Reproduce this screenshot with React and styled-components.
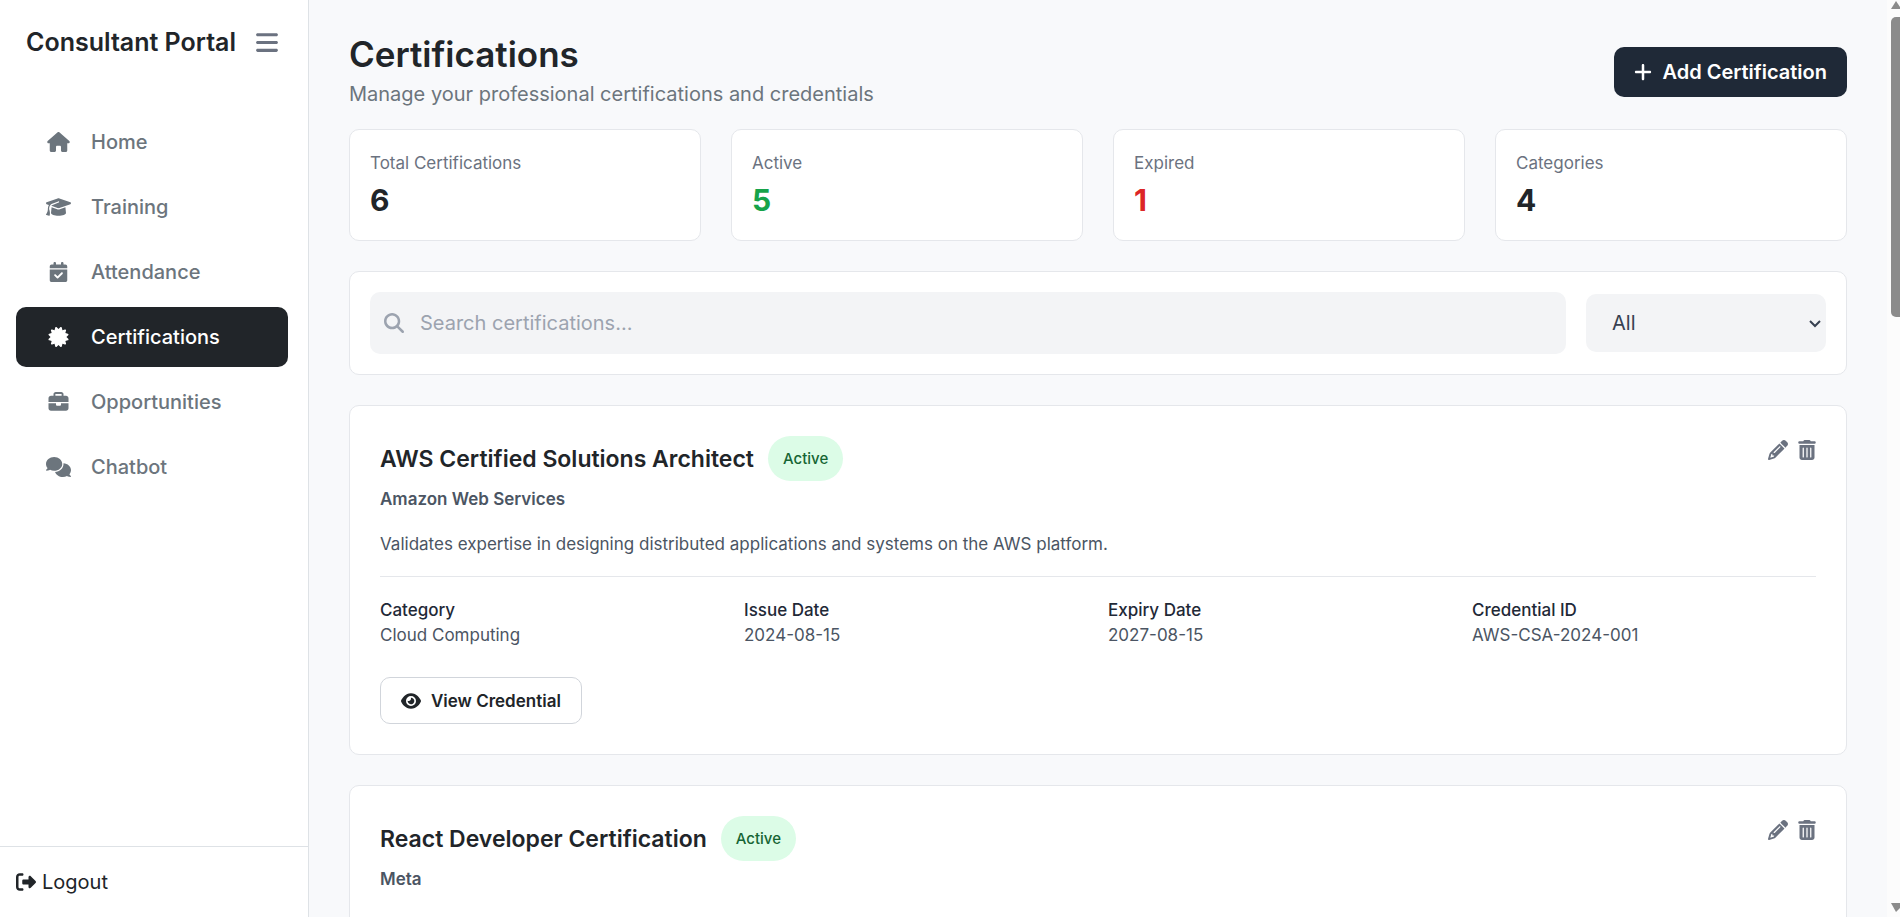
import React from "react";
import styled, { createGlobalStyle, css } from "styled-components";
import {
  FaBars,
  FaHouse,
  FaGraduationCap,
  FaCalendarCheck,
  FaCertificate,
  FaBriefcase,
  FaComments,
  FaRightFromBracket,
  FaPlus,
  FaMagnifyingGlass,
  FaPencil,
  FaTrashCan,
  FaEye,
} from "react-icons/fa6";

const GlobalStyle = createGlobalStyle`
  *, *::before, *::after { box-sizing: border-box; }
  body {
    margin: 0;
    background: #f8f9fb;
    color: #212529;
    font-family: Inter, "Liberation Sans", sans-serif;
    font-size: 20px;
    line-height: 30px;
  }
  h1, h2, h3, p, ul, dl, dd { margin: 0; padding: 0; }
  button, input, select { font: inherit; }
  svg { display: block; flex: none; }
`;

const Shell = styled.div`
  display: flex;
  height: 100vh;
  overflow: hidden;
`;

const Sidebar = styled.aside`
  display: flex;
  flex-direction: column;
  flex: 0 0 309px;
  background: #fff;
  border-right: 1px solid #dee2e6;
`;

const Brand = styled.div`
  display: flex;
  align-items: center;
  gap: 20px;
  padding: 27px 26px;
`;

const BrandName = styled.h2`
  font-size: 25px;
  font-weight: 600;
  line-height: 30px;
  white-space: nowrap;
`;

const IconButton = styled.button`
  display: flex;
  padding: 0;
  border: 0;
  background: none;
  color: #6b7280;
  font-size: ${(p) => p.$size}px;
  cursor: pointer;
  svg { width: ${(p) => p.$width || p.$size}px; }
`;

const NavList = styled.ul`
  display: flex;
  flex-direction: column;
  flex: 1;
  gap: 5px;
  padding: 28px 20px 0 16px;
  list-style: none;
`;

const NavLink = styled.a`
  display: flex;
  align-items: center;
  gap: 20px;
  height: 60px;
  padding: 0 30px;
  border-radius: 10px;
  color: #6c757d;
  font-weight: 500;
  text-decoration: none;
  ${(p) =>
    p.$active &&
    css`
      background: #212529;
      color: #fff;
    `}
`;

const NavIcon = styled.span`
  display: flex;
  width: 25px;
  svg { width: 100%; }
`;

const SidebarFooter = styled.div`
  padding: 20px 16px;
  border-top: 1px solid #dee2e6;
`;

const LogoutButton = styled.button`
  display: flex;
  align-items: center;
  gap: 6px;
  padding: 0;
  border: 0;
  background: none;
  color: #212529;
  cursor: pointer;
`;

const Main = styled.main`
  flex: 1;
  min-width: 0;
  padding: 34px 40px 0;
  overflow: hidden;
`;

const PageHeader = styled.header`
  display: flex;
  align-items: center;
  justify-content: space-between;
  margin-bottom: 20px;
`;

const PageTitle = styled.h1`
  font-size: 35px;
  font-weight: 600;
  line-height: 40px;
`;

const Subtitle = styled.p`
  padding-top: 5px;
  color: #6c757d;
`;

const PrimaryButton = styled.button`
  display: flex;
  align-items: center;
  gap: 10px;
  height: 50px;
  padding: 0 20px;
  border: 0;
  border-radius: 10px;
  background: #1f2937;
  color: #fff;
  font-weight: 600;
  cursor: pointer;
  svg { width: 18px; }
`;

const Stats = styled.section`
  display: grid;
  grid-template-columns: repeat(4, 1fr);
  gap: 30px;
  margin-bottom: 30px;
`;

const Panel = styled.div`
  border: 1px solid #e5e7eb;
  border-radius: 10px;
  background: #fff;
`;

const StatCard = styled(Panel)`
  height: 112px;
  padding: 19px 20px;
`;

const StatLabel = styled.p`
  color: #6b7280;
  font-size: 17px;
  line-height: 28px;
`;

const StatValue = styled.p`
  padding-top: 3px;
  color: ${(p) => p.$color || "#212529"};
  font-size: 30px;
  font-weight: 700;
  line-height: 40px;
`;

const FilterBar = styled(Panel)`
  display: flex;
  align-items: center;
  gap: 20px;
  margin-bottom: 30px;
  padding: 20px;
`;

const SearchField = styled.label`
  display: flex;
  align-items: center;
  flex: 1;
  gap: 16px;
  height: 62px;
  padding: 0 14px;
  border-radius: 10px;
  background: #f3f4f6;
  color: #9ca3af;
`;

const SearchInput = styled.input`
  flex: 1;
  min-width: 0;
  padding: 0;
  border: 0;
  outline: 0;
  background: none;
  color: #374151;
  &::placeholder { color: #9ca3af; opacity: 1; }
`;

const SelectWrap = styled.div`
  position: relative;
  width: 240px;
`;

const CategorySelect = styled.select`
  appearance: none;
  display: block;
  width: 100%;
  height: 58px;
  padding: 0 26px;
  border: 0;
  border-radius: 10px;
  background: #f3f4f6;
  color: #374151;
`;

const SelectArrow = styled.svg`
  position: absolute;
  top: 25px;
  right: 5px;
  width: 12px;
  height: 10px;
  fill: none;
  stroke: #374151;
  stroke-width: 2;
  pointer-events: none;
`;

const CertCard = styled(Panel)`
  min-height: 350px;
  margin-bottom: 30px;
  padding: 30px;
`;

const CardTop = styled.div`
  display: flex;
  align-items: flex-start;
  justify-content: space-between;
`;

const TitleRow = styled.div`
  display: flex;
  align-items: center;
  gap: 14px;
`;

const CertTitle = styled.h3`
  font-size: 23px;
  font-weight: 600;
  line-height: 30px;
`;

const Badge = styled.span`
  padding: 8px 15px 7px;
  border-radius: 25px;
  background: #dcfce7;
  color: #166534;
  font-size: 15px;
  font-weight: 500;
`;

const Issuer = styled.p`
  padding-top: 4px;
  color: #4b5563;
  font-size: 17px;
  font-weight: 600;
  line-height: 28px;
`;

const CardActions = styled.div`
  display: flex;
  gap: 10px;
  padding-top: 4px;
`;

const Description = styled.p`
  padding: 17px 0 18px;
  border-bottom: 1px solid #e5e7eb;
  color: #4b5563;
  font-size: 17px;
  line-height: 28px;
`;

const Details = styled.dl`
  display: grid;
  grid-template-columns: repeat(4, 1fr);
  gap: 20px;
  padding: 21px 0 29px;
  color: #4b5563;
  font-size: 17px;
  line-height: 25px;
`;

const DetailLabel = styled.dt`
  color: #1f2937;
  font-weight: 500;
`;

const OutlineButton = styled.button`
  display: flex;
  align-items: center;
  gap: 10px;
  height: 47px;
  padding: 0 20px;
  border: 1px solid #d1d5db;
  border-radius: 10px;
  background: #fff;
  color: #212529;
  font-size: 17px;
  font-weight: 600;
  cursor: pointer;
`;

const ScrollTrack = styled.div`
  display: flex;
  flex-direction: column;
  align-items: flex-end;
  flex: 0 0 13px;
  overflow: hidden;
  background: #fcfcfc;
`;

const ScrollArrow = styled.svg`
  width: 10px;
  height: 17px;
  fill: #8b8b8b;
`;

const ScrollLane = styled.div`
  flex: 1;
  width: 9px;
`;

const ScrollThumb = styled.div`
  height: 34%;
  border-radius: 5px 0 0 5px;
  background: #8b8b8b;
`;

const NAV = [
  { label: "Home", Icon: FaHouse },
  { label: "Training", Icon: FaGraduationCap },
  { label: "Attendance", Icon: FaCalendarCheck },
  { label: "Certifications", Icon: FaCertificate, active: true },
  { label: "Opportunities", Icon: FaBriefcase },
  { label: "Chatbot", Icon: FaComments },
];

const STATS = [
  { label: "Total Certifications", value: 6 },
  { label: "Active", value: 5, color: "#16a34a" },
  { label: "Expired", value: 1, color: "#dc2626" },
  { label: "Categories", value: 4 },
];

const CERTS = [
  {
    title: "AWS Certified Solutions Architect",
    status: "Active",
    issuer: "Amazon Web Services",
    description:
      "Validates expertise in designing distributed applications and systems on the AWS platform.",
    details: [
      ["Category", "Cloud Computing"],
      ["Issue Date", "2024-08-15"],
      ["Expiry Date", "2027-08-15"],
      ["Credential ID", "AWS-CSA-2024-001"],
    ],
  },
  {
    title: "React Developer Certification",
    status: "Active",
    issuer: "Meta",
  },
];

function Certification({ cert }) {
  return (
    <CertCard as="article">
      <CardTop>
        <div>
          <TitleRow>
            <CertTitle>{cert.title}</CertTitle>
            <Badge>{cert.status}</Badge>
          </TitleRow>
          <Issuer>{cert.issuer}</Issuer>
        </div>
        <CardActions>
          <IconButton $size={20} aria-label="Edit"><FaPencil /></IconButton>
          <IconButton $size={20} $width={18} aria-label="Delete"><FaTrashCan /></IconButton>
        </CardActions>
      </CardTop>
      {cert.description && <Description>{cert.description}</Description>}
      {cert.details && (
        <>
          <Details>
            {cert.details.map(([label, value]) => (
              <div key={label}>
                <DetailLabel>{label}</DetailLabel>
                <dd>{value}</dd>
              </div>
            ))}
          </Details>
          <OutlineButton><FaEye size={20} />View Credential</OutlineButton>
        </>
      )}
    </CertCard>
  );
}

export default function App() {
  return (
    <>
      <GlobalStyle />
      <Shell>
        <Sidebar>
          <Brand>
            <BrandName>Consultant Portal</BrandName>
            <IconButton $size={25} $width={22} aria-label="Toggle menu"><FaBars /></IconButton>
          </Brand>
          <NavList>
            {NAV.map(({ label, Icon, active }) => (
              <li key={label}>
                <NavLink href="#" $active={active}>
                  <NavIcon><Icon /></NavIcon>
                  {label}
                </NavLink>
              </li>
            ))}
          </NavList>
          <SidebarFooter>
            <LogoutButton><FaRightFromBracket />Logout</LogoutButton>
          </SidebarFooter>
        </Sidebar>
        <Main>
          <PageHeader>
            <div>
              <PageTitle>Certifications</PageTitle>
              <Subtitle>Manage your professional certifications and credentials</Subtitle>
            </div>
            <PrimaryButton><FaPlus />Add Certification</PrimaryButton>
          </PageHeader>
          <Stats>
            {STATS.map((s) => (
              <StatCard key={s.label}>
                <StatLabel>{s.label}</StatLabel>
                <StatValue $color={s.color}>{s.value}</StatValue>
              </StatCard>
            ))}
          </Stats>
          <FilterBar>
            <SearchField>
              <FaMagnifyingGlass />
              <SearchInput type="text" placeholder="Search certifications..." aria-label="Search certifications" />
            </SearchField>
            <SelectWrap>
              <CategorySelect aria-label="Category">
                <option>All</option>
              </CategorySelect>
              <SelectArrow viewBox="0 0 12 10" aria-hidden="true"><path d="M1 2 L6 7 L11 2" /></SelectArrow>
            </SelectWrap>
          </FilterBar>
          {CERTS.map((cert) => (
            <Certification key={cert.title} cert={cert} />
          ))}
        </Main>
        <ScrollTrack aria-hidden="true">
          <ScrollArrow viewBox="0 0 10 17"><path d="M1 9 L6 1 L10 7 V9 Z" /></ScrollArrow>
          <ScrollLane><ScrollThumb /></ScrollLane>
          <ScrollArrow viewBox="0 0 10 17"><path d="M1 3 H10 V8 L6 12 Z" /></ScrollArrow>
        </ScrollTrack>
      </Shell>
    </>
  );
}
